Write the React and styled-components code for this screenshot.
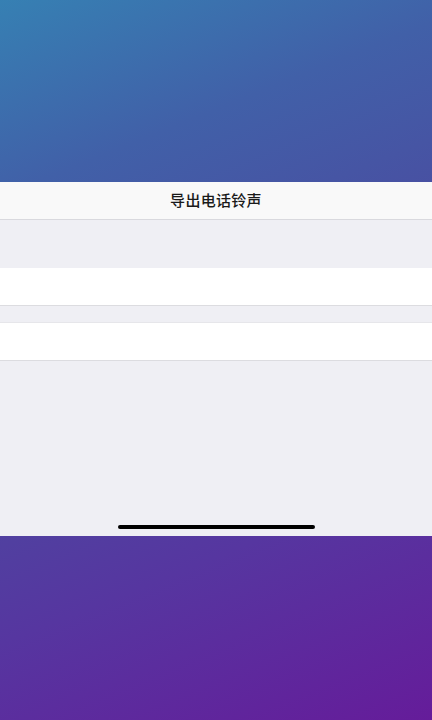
import styled, { createGlobalStyle } from "styled-components";

const GlobalStyle = createGlobalStyle`
  html, body {
    margin: 0;
    padding: 0;
    height: 100%;
  }
  body {
    font-family: "Noto Sans CJK SC", "Noto Sans", sans-serif;
  }
`;

const Page = styled.div`
  width: 432px;
  height: 720px;
  display: flex;
  flex-direction: column;
  background: linear-gradient(158deg, #3680b3 0%, #4160a8 22%, #4b4aa0 48%, #5636a0 72%, #651c9a 100%);
  overflow: hidden;
`;

const Backdrop = styled.div`
  height: ${(p) => p.$h}px;
  flex-shrink: 0;
`;

const Sheet = styled.div`
  height: 354px;
  flex-shrink: 0;
  display: flex;
  flex-direction: column;
  background: #efeff4;
`;

const NavBar = styled.div`
  height: 37px;
  display: flex;
  align-items: center;
  justify-content: center;
  background: #f9f9f9;
  border-bottom: 1px solid #d9d9de;
`;

const Title = styled.span`
  font-size: 15px;
  font-weight: 500;
  color: #1a1a1a;
  letter-spacing: 0.3px;
  margin-top: -2px;
`;

const Gap = styled.div`
  height: ${(p) => p.$h}px;
`;

const Cell = styled.div`
  height: ${(p) => p.$h}px;
  background: #fff;
  border-top: 1px solid ${(p) => (p.$top ? "#e6e6ea" : "transparent")};
  border-bottom: 1px solid #dcdce0;
`;

const Filler = styled.div`
  flex: 1;
  display: flex;
  align-items: flex-end;
  justify-content: center;
  padding-bottom: 7px;
`;

const HomeIndicator = styled.div`
  width: 197px;
  height: 4px;
  border-radius: 2px;
  background: #000;
`;

export default function App() {
  return (
    <>
      <GlobalStyle />
      <Page>
        <Backdrop $h={182} />
        <Sheet>
          <NavBar>
            <Title>导出电话铃声</Title>
          </NavBar>
          <Gap $h={48} />
          <Cell $h={36} />
          <Gap $h={16} />
          <Cell $h={37} $top />
          <Filler>
            <HomeIndicator />
          </Filler>
        </Sheet>
        <Backdrop $h={184} />
      </Page>
    </>
  );
}
